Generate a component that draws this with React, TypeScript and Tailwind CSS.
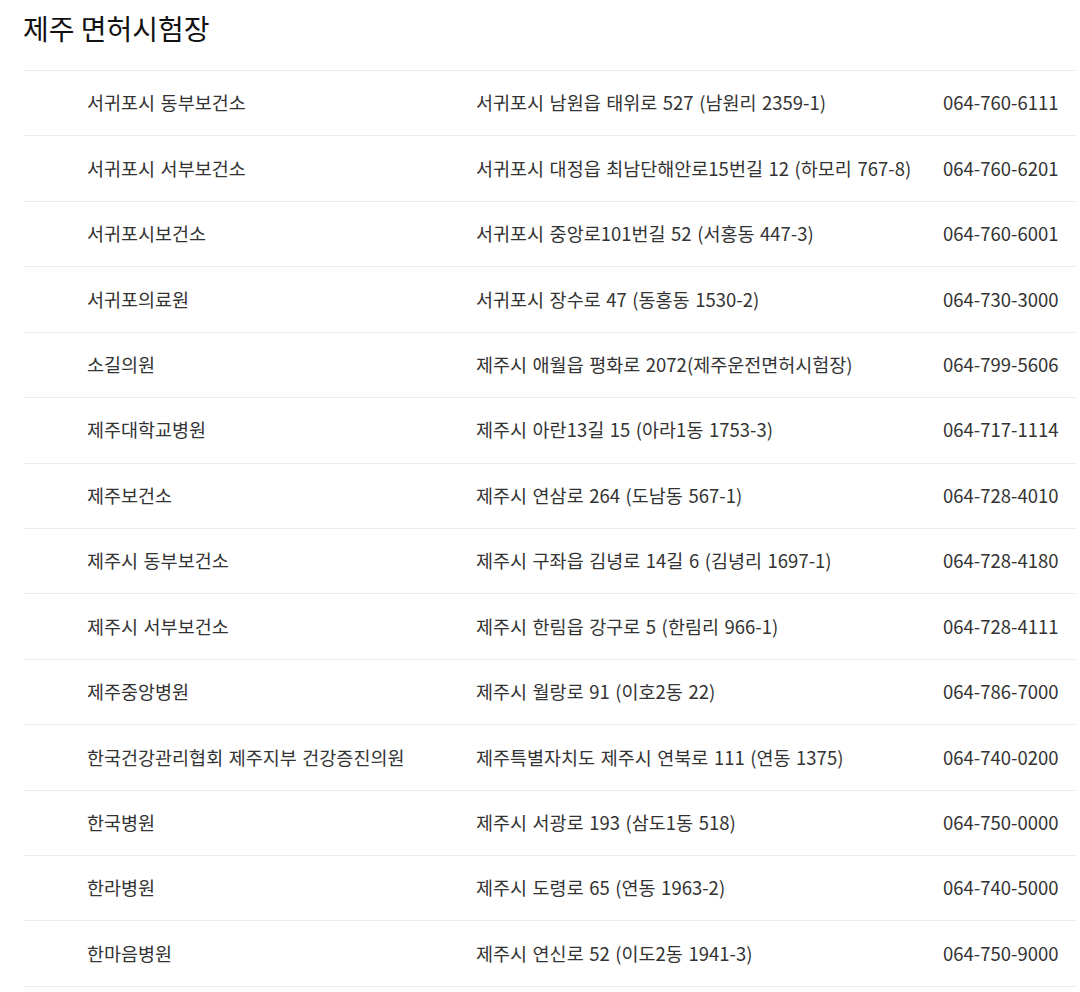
const rows: [string, string, string][] = [
  ["서귀포시 동부보건소", "서귀포시 남원읍 태위로 527 (남원리 2359-1)", "064-760-6111"],
  ["서귀포시 서부보건소", "서귀포시 대정읍 최남단해안로15번길 12 (하모리 767-8)", "064-760-6201"],
  ["서귀포시보건소", "서귀포시 중앙로101번길 52 (서홍동 447-3)", "064-760-6001"],
  ["서귀포의료원", "서귀포시 장수로 47 (동홍동 1530-2)", "064-730-3000"],
  ["소길의원", "제주시 애월읍 평화로 2072(제주운전면허시험장)", "064-799-5606"],
  ["제주대학교병원", "제주시 아란13길 15 (아라1동 1753-3)", "064-717-1114"],
  ["제주보건소", "제주시 연삼로 264 (도남동 567-1)", "064-728-4010"],
  ["제주시 동부보건소", "제주시 구좌읍 김녕로 14길 6 (김녕리 1697-1)", "064-728-4180"],
  ["제주시 서부보건소", "제주시 한림읍 강구로 5 (한림리 966-1)", "064-728-4111"],
  ["제주중앙병원", "제주시 월랑로 91 (이호2동 22)", "064-786-7000"],
  ["한국건강관리협회 제주지부 건강증진의원", "제주특별자치도 제주시 연북로 111 (연동 1375)", "064-740-0200"],
  ["한국병원", "제주시 서광로 193 (삼도1동 518)", "064-750-0000"],
  ["한라병원", "제주시 도령로 65 (연동 1963-2)", "064-740-5000"],
  ["한마음병원", "제주시 연신로 52 (이도2동 1941-3)", "064-750-9000"],
];

export default function App() {
  return (
    <div
      className="bg-white w-[1080px] min-h-[992px] pl-[23px] pr-[4px] pt-[7px] text-[#333]"
      style={{ fontFamily: '"Noto Sans CJK KR", "Noto Sans", sans-serif' }}
    >
      <h1 className="text-[28px] leading-[42px] text-[#111] font-normal mb-[21px]">제주 면허시험장</h1>
      <div className="border-t border-[#eee]">
        {rows.map((r, i) => (
          <div
            key={i}
            className="grid grid-cols-[435px_467px_151px] h-[65.43px] items-center border-b border-[#eee] text-[18.5px] [word-spacing:1.4px]"
          >
            <div className="pl-[64px] pr-[18px] whitespace-nowrap">{r[0]}</div>
            <div className="px-[18px] whitespace-nowrap">{r[1]}</div>
            <div className="px-[18px] whitespace-nowrap">{r[2]}</div>
          </div>
        ))}
      </div>
    </div>
  );
}
